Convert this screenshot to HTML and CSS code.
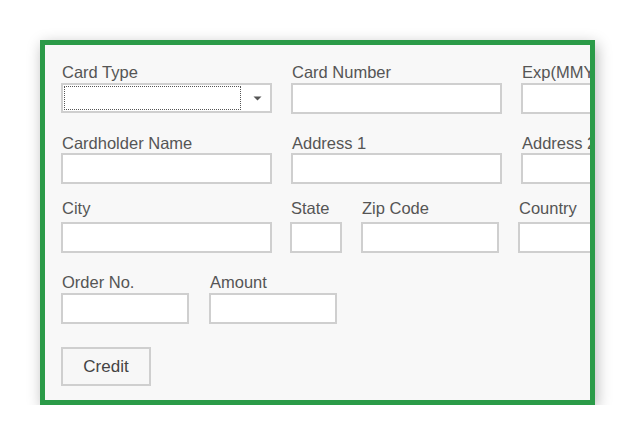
FILE: index.html
```html
<!DOCTYPE html>
<html>
<head>
<meta charset="utf-8">
<link rel="stylesheet" href="styles.css">
</head>
<body>
<div class="frame">
  <div class="row row-1">
    <div class="field w-wide">
      <div class="label">Card Type</div>
      <div class="select">
        <span class="focus"></span>
        <svg class="arrow" width="9" height="5" viewBox="0 0 9 5"><path d="M0.5 0.5 L8.5 0.5 L4.5 4.5 Z" fill="#555"/></svg>
      </div>
    </div>
    <div class="field w-wide">
      <div class="label">Card Number</div>
      <div class="input"></div>
    </div>
    <div class="field w-wide">
      <div class="label">Exp(MMYY)</div>
      <div class="input"></div>
    </div>
  </div>
  <div class="row row-2">
    <div class="field w-wide">
      <div class="label">Cardholder Name</div>
      <div class="input"></div>
    </div>
    <div class="field w-wide">
      <div class="label">Address 1</div>
      <div class="input"></div>
    </div>
    <div class="field w-wide">
      <div class="label">Address 2</div>
      <div class="input"></div>
    </div>
  </div>
  <div class="row row-3">
    <div class="field w-wide">
      <div class="label">City</div>
      <div class="input"></div>
    </div>
    <div class="field w-state">
      <div class="label">State</div>
      <div class="input"></div>
    </div>
    <div class="field w-zip">
      <div class="label">Zip Code</div>
      <div class="input"></div>
    </div>
    <div class="field w-wide">
      <div class="label">Country</div>
      <div class="input"></div>
    </div>
  </div>
  <div class="row row-4">
    <div class="field w-small">
      <div class="label">Order No.</div>
      <div class="input"></div>
    </div>
    <div class="field w-small">
      <div class="label">Amount</div>
      <div class="input"></div>
    </div>
  </div>
  <div class="actions">
    <button class="btn">Credit</button>
  </div>
</div>
</body>
</html>
```
FILE: styles.css
```css
html, body {
  margin: 0;
  padding: 0;
  background: #ffffff;
}
body {
  font-family: "Liberation Sans", Arial, sans-serif;
  padding: 40px 0 0 40px;
}
.frame {
  width: 555px;
  height: 365px;
  box-sizing: border-box;
  border: 5px solid #2b9b48;
  background: #f8f8f8;
  box-shadow: 2px 4px 14px rgba(0, 0, 0, 0.28);
  overflow: hidden;
  padding: 17px 0 0 16px;
}
.row {
  display: flex;
  column-gap: 19px;
  white-space: nowrap;
}
.row-2 { margin-top: 19px; }
.row-3 { margin-top: 14px; column-gap: 18px; }
.row-4 { margin-top: 19px; column-gap: 20px; }
.row-3 .w-zip { margin-left: 1px; margin-right: 1px; }
.field {
  flex: none;
  display: flex;
  flex-direction: column;
}
.w-wide { width: 211px; }
.w-state { width: 52px; }
.w-zip { width: 138px; }
.w-small { width: 128px; }
.label {
  font-size: 16.5px;
  line-height: 20px;
  color: #555555;
  padding-left: 1px;
  margin-bottom: 1px;
}
.row-3 .label { margin-bottom: 4px; }
.row-2 .label { margin-bottom: 0; }
.input, .select {
  height: 31px;
  box-sizing: border-box;
  border: 2px solid #cfcfcf;
  background: #ffffff;
}
.select {
  display: flex;
  align-items: center;
  padding: 1px 8px 1px 1px;
  height: 30px;
}
.focus {
  flex: 1;
  align-self: stretch;
  border: 1px dotted #555;
  margin-right: 12px;
}
.arrow { flex: none; }
.actions {
  margin-top: 23px;
}
.btn {
  width: 90px;
  height: 39px;
  box-sizing: border-box;
  border: 2px solid #cfcfcf;
  background: #f7f7f7;
  font-family: "Liberation Sans", Arial, sans-serif;
  font-size: 17px;
  color: #444;
  padding: 0;
}
```
